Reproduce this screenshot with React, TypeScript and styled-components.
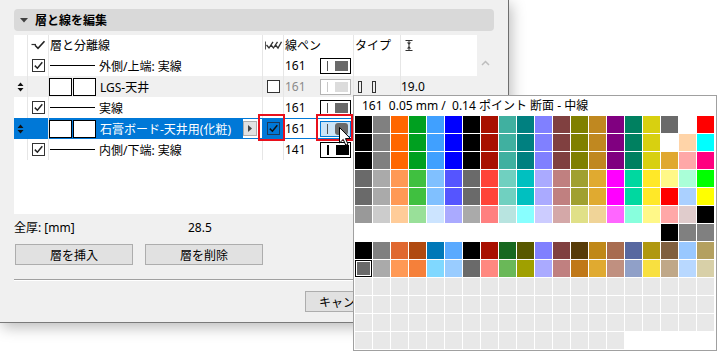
import React from "react";
import styled, { createGlobalStyle, css } from "styled-components";

const GlobalStyle = createGlobalStyle`
  html, body {
    margin: 0;
    padding: 0;
    background: #ffffff;
  }
  body {
    font-family: "Noto Sans", "Noto Sans CJK JP", sans-serif;
    font-size: 12px;
    color: #000000;
  }
`;

const COLS = "13px 21px 214px 21px 70px 47px 77px";
const BLUE = "#0078d7";

const Stage = styled.div`
  position: relative;
  width: 717px;
  height: 352px;
  overflow: hidden;
  background: #ffffff;
`;

const Dialog = styled.div`
  width: 509px;
  height: 323px;
  box-sizing: border-box;
  padding: 9px 14px 0 14px;

  display: flex;
  flex-direction: column;

  background: #f0f0f0;
  border-right: 1px solid #6e6e6e;
  border-bottom: 1px solid #7a7a7a;
  box-shadow: 2px 4px 14px rgba(0, 0, 0, 0.28);
`;

const SectionHeader = styled.div`
  height: 22px;
  display: flex;
  align-items: center;
  gap: 7px;
  padding-left: 6px;
  border-radius: 4px;
  background: #d9d9d9;
`;

const SectionTitle = styled.span`
  font-weight: 700;
  font-size: 12px;
`;

const TableArea = styled.div`
  margin-top: 4px;
  height: 179px;
  display: flex;
`;

const Table = styled.div`
  width: 463px;
  background: #ffffff;
`;

const ScrollTrack = styled.div`
  width: 17px;
  display: flex;
  justify-content: center;
  padding-top: 25px;
  box-sizing: border-box;
`;

const Row = styled.div<{ $h?: number; $muted?: boolean }>`
  display: grid;
  grid-template-columns: ${COLS};
  height: ${p => p.$h ?? 21}px;
  background: ${p => (p.$muted ? "#f0f0f0" : "#ffffff")};
`;

const Cell = styled.div<{ $pl?: number; $center?: boolean; $fill?: boolean; $frame?: boolean; $dim?: boolean }>`
  position: relative;
  box-sizing: border-box;
  min-width: 0;
  display: flex;
  align-items: center;
  justify-content: ${p => (p.$center ? "center" : "flex-start")};
  padding-left: ${p => p.$pl ?? 0}px;
  white-space: nowrap;
  border-left: 1px solid #e6e6e6;
  &:first-child {
    border-left: none;
  }
  color: ${p => (p.$dim ? "#8a8a8a" : "inherit")};
  ${p =>
    p.$fill &&
    css`
      background: ${BLUE};
      border-left-color: ${BLUE};
      color: #ffffff;
    `}
  ${p =>
    p.$frame &&
    css`
      box-shadow: inset 0 1px 0 ${BLUE}, inset 0 -1px 0 ${BLUE};
    `}
`;

const SelectedName = styled.div`
  flex: 1;
  height: 100%;
  display: flex;
  align-items: center;
  background: ${BLUE};
  color: #ffffff;
`;

const ExpandButton = styled.div`
  width: 14px;
  height: 15px;
  box-sizing: border-box;
  margin-right: 5px;
  display: flex;
  align-items: center;
  justify-content: center;
  background: #e1e1e1;
  border: 1px solid #adadad;
`;

const LineSample = styled.span`
  width: 45px;
  height: 0;
  border-top: 1px solid #000000;
  margin-right: 4px;
`;

const Squares = styled.div`
  display: flex;
  gap: 1px;
  margin-right: 4px;
`;

const Square = styled.div`
  width: 23px;
  height: 18px;
  box-sizing: border-box;
  border: 1px solid #000000;
  background: #ffffff;
`;

const Checkbox = styled.div<{ $tone?: "plain" | "blue" }>`
  width: 13px;
  height: 13px;
  box-sizing: border-box;
  display: flex;
  align-items: center;
  justify-content: center;
  border: 1px solid ${p => (p.$tone === "blue" ? "#1d3a5c" : "#333333")};
  background: ${p => (p.$tone === "blue" ? BLUE : "#ffffff")};
`;

const PenCell = styled(Cell)`
  justify-content: space-between;
  padding: 0 2px 0 1px;
`;

type SwatchKind = "normal" | "muted" | "selected" | "black";

const Swatch = styled.div<{ $kind: SwatchKind }>`
  width: 31px;
  height: 16px;
  box-sizing: border-box;
  display: flex;
  align-items: center;
  gap: 7px;
  padding-left: 6px;
  border: 1px solid ${p => (p.$kind === "muted" ? "#b4b4b4" : p.$kind === "selected" ? BLUE : "#000000")};
  background: ${p => (p.$kind === "selected" ? "#cce4f7" : "#ffffff")};
`;

const SwatchLine = styled.div<{ $kind: SwatchKind }>`
  width: ${p => (p.$kind === "black" ? 2 : 1)}px;
  height: 10px;
  background: ${p => (p.$kind === "muted" ? "#c8c8c8" : p.$kind === "black" ? "#000000" : "#555555")};
`;

const SwatchFill = styled.div<{ $kind: SwatchKind }>`
  width: 13px;
  height: ${p => (p.$kind === "selected" ? 12 : 10)}px;
  border-radius: ${p => (p.$kind === "selected" ? 3 : 0)}px;
  background: ${p =>
    p.$kind === "muted" ? "#dcdcdc" : p.$kind === "black" ? "#000000" : "#6a6a6a"};
`;

const TypeBar = styled.div`
  width: 4px;
  height: 12px;
  box-sizing: border-box;
  border: 1px solid #333333;
  margin-right: 10px;
`;

const Highlight = styled.div<{ $l: number; $t: number; $w: number; $h: number }>`
  position: absolute;
  left: ${p => p.$l}px;
  top: ${p => p.$t}px;
  width: ${p => p.$w}px;
  height: ${p => p.$h}px;
  box-sizing: border-box;
  border: 2px solid #e8101c;
  z-index: 2;
  pointer-events: none;
`;

const TotalRow = styled.div`
  margin-top: 5px;
  height: 16px;
  display: flex;
  align-items: center;
`;

const TotalLabel = styled.span`
  width: 174px;
`;

const ButtonRow = styled.div`
  margin-top: 9px;
  display: flex;
  gap: 12px;
  padding-left: 1px;
`;

const Button = styled.div<{ $w?: number }>`
  width: ${p => p.$w ?? 118}px;
  height: 21px;
  box-sizing: border-box;
  display: flex;
  align-items: center;
  justify-content: center;
  background: #e1e1e1;
  border: 1px solid #adadad;
`;

const Separator = styled.div`
  margin-top: 14px;
  height: 1px;
  background: #a0a0a0;
  border-bottom: 1px solid #ffffff;
`;

const Footer = styled.div`
  margin-top: 10px;
  display: flex;
  gap: 10px;
  padding-left: 291px;
`;

const Popup = styled.div`
  position: absolute;
  left: 353px;
  top: 95px;
  width: 364px;
  height: 256px;
  box-sizing: border-box;
  padding: 0 0 1px 1px;
  background: #ffffff;
  border: 1px solid #a0a0a0;
  z-index: 5;
`;

const PopupTitle = styled.div`
  height: 20px;
  line-height: 20px;
  padding-left: 7px;
  white-space: pre;
  font-size: 12px;
`;

const Palette = styled.div`
  display: grid;
  grid-template-columns: repeat(20, 17px);
  grid-auto-rows: 17px;
  gap: 1px;
`;

const Chip = styled.div<{ $selected?: boolean }>`
  ${p =>
    p.$selected &&
    css`
      box-shadow: inset 0 0 0 1px #000000, inset 0 0 0 2px #ffffff;
    `}
`;

const Pointer = styled.svg`
  position: absolute;
  left: 339px;
  top: 127px;
  z-index: 10;
`;

const CheckMark = ({ color = "#222222" }: { color?: string }) => (
  <svg width="11" height="11" viewBox="0 0 11 11">
    <path d="M1.8 5.6 L4.4 8.2 L9.3 2.3" fill="none" stroke={color} strokeWidth="1.5" />
  </svg>
);

const Handle = () => (
  <svg width="7" height="10" viewBox="0 0 7 10">
    <path d="M3.5 0.5 L6.5 4 H0.5 Z M3.5 9.5 L6.5 6 H0.5 Z" fill="#111111" />
  </svg>
);

const HeaderCheck = () => (
  <svg width="15" height="11" viewBox="0 0 15 11">
    <path d="M0.5 4.5 H5" stroke="#333333" strokeWidth="1.2" />
    <path d="M4 5.3 L7 8.3 L13.5 1.2" fill="none" stroke="#222222" strokeWidth="1.6" />
  </svg>
);

const AllCheck = () => (
  <svg width="17" height="9" viewBox="0 0 17 9">
    <path d="M0.5 0.5 V8.5" stroke="#555555" strokeWidth="1" />
    <path d="M1.5 4 L4 7 L8 0.8 M6 4 L8.5 7 L12.5 0.8 M10.5 4 L13 7 L16.5 0.8" fill="none" stroke="#333333" strokeWidth="1.3" />
  </svg>
);

const ThicknessIcon = () => (
  <svg width="8" height="11" viewBox="0 0 8 11">
    <path d="M0.5 0.5 H7.5 M0.5 10.5 H7.5 M4 1 V10" stroke="#333333" strokeWidth="1" />
    <path d="M1.8 2.5 H6.2 L4 4.8 Z M1.8 8.5 H6.2 L4 6.2 Z" fill="#333333" />
  </svg>
);

const Caret = ({ dir, color }: { dir: "down" | "right"; color: string }) =>
  dir === "down" ? (
    <svg width="8" height="5" viewBox="0 0 8 5">
      <path d="M0 0 H8 L4 4.5 Z" fill={color} />
    </svg>
  ) : (
    <svg width="4" height="7" viewBox="0 0 4 7">
      <path d="M0 0 V7 L4 3.5 Z" fill={color} />
    </svg>
  );

const ChevronUp = () => (
  <svg width="9" height="6" viewBox="0 0 9 6">
    <path d="M1 5 L4.5 1.5 L8 5" fill="none" stroke="#bdbdbd" strokeWidth="1.5" />
  </svg>
);

const PenSwatch = ({ kind }: { kind: SwatchKind }) => (
  <Swatch $kind={kind}>
    <SwatchLine $kind={kind} />
    <SwatchFill $kind={kind} />
  </Swatch>
);

const base17 = ["#000000", "#808080", "#ff6600", "#00a020", "#40a0ff", "#0000ff", "#000000", "#a81000", "#40b0a0", "#008080", "#8080ff", "#804040", "#808000", "#c08820", "#800080", "#008060", "#d8d010"];
const light17 = ["#6a6a6a", "#aaaaaa", "#ff9955", "#40c040", "#80c0ff", "#5555ff", "#6a6a6a", "#ff4438", "#70d0c0", "#00c0c0", "#aaaaff", "#c08080", "#a0a030", "#e0aa30", "#ff00ff", "#00d8a0", "#ffe828"];
const empty = (n: number) => Array<string | null>(n).fill(null);
const gray = (n: number) => Array<string | null>(n).fill("#e8e8e8");

const PALETTE: (string | null)[][] = [
  [...base17, "#6a6a6a", "#ffffff", "#ff0000"],
  [...base17, "#ffffff", "#ffd4a8", "#00ffff"],
  [...base17, "#e0a830", "#ffa8a8", "#ff0080"],
  [...light17, "#fff888", "#aaffd8", "#00ff00"],
  [...light17, "#ff0000", "#aad0ff", "#ffff00"],
  ["#999999", "#cccccc", "#ffcc99", "#99e099", "#cce4ff", "#aaaaff", "#aaaaaa", "#ff8080", "#b8e4e0", "#88ffff", "#ccccff", "#d4a8a8", "#e0e088", "#f0d498", "#ff66ff", "#88ffdd", "#fff888", "#ffa8a8", "#e0cccc", "#000000"],
  [...empty(17), "#000000", "#808080", "#808080"],
  ["#000000", "#808080", "#e06830", "#b04a10", "#0078b8", "#5aaaff", "#000000", "#a81000", "#186820", "#585800", "#8080ff", "#804040", "#583c08", "#c08818", "#a86c50", "#5868a0", "#b09810", "#806040", "#99c8ff", "#b4a060"],
  ["#6a6a6a", "#aaaaaa", "#ff9955", "#f5803a", "#80d8ff", "#99ccff", "#6a6a6a", "#ff8880", "#6ab858", "#a0a000", "#aaaaff", "#c08080", "#c07818", "#e0aa30", "#c09080", "#90a0c8", "#f8e040", "#c0a888", "#b8d8ff", "#d8d0a8"],
  gray(20),
  gray(20),
  gray(20),
  gray(15),
];

interface LineRow {
  label: string;
  pen: string;
  swatch: SwatchKind;
}

function LineLayer({ label, pen, swatch }: LineRow) {
  return (
    <Row>
      <Cell />
      <Cell $center>
        <Checkbox>
          <CheckMark />
        </Checkbox>
      </Cell>
      <Cell $pl={1}>
        <LineSample />
        {label}
      </Cell>
      <Cell />
      <PenCell>
        {pen}
        <PenSwatch kind={swatch} />
      </PenCell>
      <Cell />
      <Cell />
    </Row>
  );
}

export default function App() {
  return (
    <Stage>
      <GlobalStyle />
      <Dialog>
        <SectionHeader>
          <Caret dir="down" color="#404040" />
          <SectionTitle>層と線を編集</SectionTitle>
        </SectionHeader>

        <TableArea>
          <Table>
            <Row $h={20}>
              <Cell />
              <Cell $center>
                <HeaderCheck />
              </Cell>
              <Cell $pl={1}>層と分離線</Cell>
              <Cell $center>
                <AllCheck />
              </Cell>
              <Cell $pl={1}>線ペン</Cell>
              <Cell $pl={1}>タイプ</Cell>
              <Cell $pl={4}>
                <ThicknessIcon />
              </Cell>
            </Row>

            <LineLayer label="外側/上端: 実線" pen="161" swatch="normal" />

            <Row $muted>
              <Cell $center>
                <Handle />
              </Cell>
              <Cell />
              <Cell>
                <Squares>
                  <Square />
                  <Square />
                </Squares>
                LGS-天井
              </Cell>
              <Cell $center>
                <Checkbox />
              </Cell>
              <PenCell $dim>
                161
                <PenSwatch kind="muted" />
              </PenCell>
              <Cell $pl={4}>
                <TypeBar />
                <TypeBar />
              </Cell>
              <Cell>19.0</Cell>
            </Row>

            <LineLayer label="実線" pen="161" swatch="normal" />

            <Row>
              <Cell $fill $center>
                <Handle />
              </Cell>
              <Cell $fill />
              <Cell $frame>
                <SelectedName>
                  <Squares>
                    <Square />
                    <Square />
                  </Squares>
                  石膏ボード-天井用(化粧)
                </SelectedName>
                <ExpandButton>
                  <Caret dir="right" color="#444444" />
                </ExpandButton>
              </Cell>
              <Cell $fill $center>
                <Checkbox $tone="blue">
                  <CheckMark color="#111111" />
                </Checkbox>
                <Highlight $l={-5} $t={-4} $w={27} $h={27} />
              </Cell>
              <PenCell $frame>
                161
                <PenSwatch kind="selected" />
                <Highlight $l={32} $t={-4} $w={37} $h={27} />
              </PenCell>
              <Cell $frame />
              <Cell $frame />
            </Row>

            <LineLayer label="内側/下端: 実線" pen="141" swatch="black" />
          </Table>
          <ScrollTrack>
            <ChevronUp />
          </ScrollTrack>
        </TableArea>

        <TotalRow>
          <TotalLabel>全厚: [mm]</TotalLabel>
          <span>28.5</span>
        </TotalRow>

        <ButtonRow>
          <Button>層を挿入</Button>
          <Button>層を削除</Button>
        </ButtonRow>

        <Separator />

        <Footer>
          <Button $w={88}>キャンセル</Button>
          <Button $w={88}>OK</Button>
        </Footer>
      </Dialog>

      <Popup>
        <PopupTitle>161  0.05 mm /  0.14 ポイント 断面 - 中線</PopupTitle>
        <Palette>
          {PALETTE.flatMap((row, r) =>
            row.map((c, i) => (
              <Chip
                key={`${r}-${i}`}
                $selected={r === 8 && i === 0}
                style={{ background: c ?? "transparent" }}
              />
            ))
          )}
        </Palette>
      </Popup>

      <Pointer width="12" height="19" viewBox="0 0 12 19">
        <path d="M0.5 0.5 V16 L4.2 12.4 L6.8 18.2 L9 17.2 L6.5 11.6 H11.5 Z" fill="#ffffff" stroke="#000000" strokeWidth="1" />
      </Pointer>
    </Stage>
  );
}
